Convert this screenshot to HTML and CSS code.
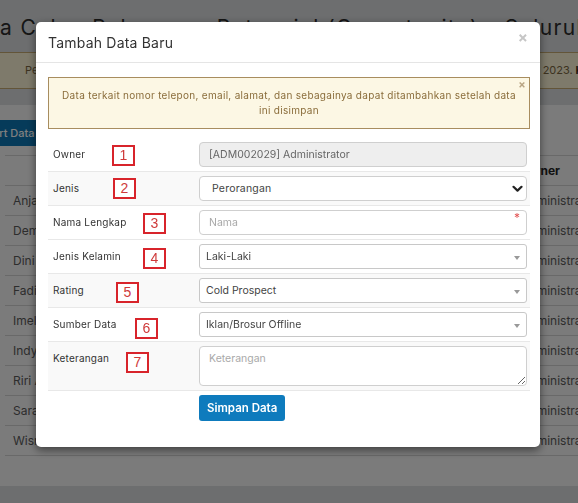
FILE: index.html
```html
<!DOCTYPE html>
<html lang="id">
<head>
<meta charset="utf-8">
<title>Tambah Data Baru</title>
<link rel="stylesheet" href="styles.css">
</head>
<body>
<div class="page">
  <h1 class="page-title">Data Calon Pelanggan Potensial (Opportunity) - Seluruh Data</h1>
  <p class="notice">Periode data yang ditampilkan saat ini adalah mulai dari tanggal 1 Januari 2023 sampai 31 Desember 2023. <b>Klik di sini</b> untuk mengubah periode.</p>
  <section class="card">
    <button class="btn-export" type="button">Export Data</button>
    <table class="data-table">
      <colgroup><col class="c-name"><col class="c-phone"><col class="c-status"><col class="c-owner"></colgroup>
      <thead>
        <tr><th></th><th>Telepon</th><th>Status</th><th>Owner</th></tr>
      </thead>
      <tbody>
        <tr><td>Anjani Putri</td><td>0812</td><td>Cold</td><td>Administrator</td></tr>
        <tr><td>Dembo Saputra</td><td>0813</td><td>Cold</td><td>Administrator</td></tr>
        <tr><td>Dini Rahma</td><td>0814</td><td>Cold</td><td>Administrator</td></tr>
        <tr><td>Fadil Hakim</td><td>0815</td><td>Cold</td><td>Administrator</td></tr>
        <tr><td>Imelda Sari</td><td>0816</td><td>Cold</td><td>Administrator</td></tr>
        <tr><td>Indy Permata</td><td>0817</td><td>Cold</td><td>Administrator</td></tr>
        <tr><td>Riri Anggraini</td><td>0818</td><td>Cold</td><td>Administrator</td></tr>
        <tr><td>Sarah Wulandari</td><td>0819</td><td>Cold</td><td>Administrator</td></tr>
        <tr><td>Wisnu Pratama</td><td>0821</td><td>Cold</td><td>Administrator</td></tr>
      </tbody>
    </table>
  </section>
</div>

<div class="backdrop"></div>

<div class="modal" role="dialog">
  <div class="modal-header">
    <h4 class="modal-title">Tambah Data Baru</h4>
    <span class="modal-close">&times;</span>
  </div>
  <div class="modal-body">
    <div class="alert">
      <span class="alert-close">&times;</span>
      Data terkait nomor telepon, email, alamat, dan sebagainya dapat ditambahkan setelah data ini disimpan
    </div>

    <div class="form">
      <div class="form-row">
        <div class="label">Owner</div>
        <div class="field"><div class="control disabled">[ADM002029] Administrator</div></div>
        <span class="tag tag-1">1</span>
      </div>
      <div class="form-row striped">
        <div class="label">Jenis</div>
        <div class="field">
          <div class="control native">Perorangan
            <svg class="chevron" width="11" height="8" viewBox="0 0 11 8"><path d="M1.5 1.8 L5.5 5.6 L9.5 1.8" fill="none" stroke="#222" stroke-width="2.2" stroke-linecap="round" stroke-linejoin="round"/></svg>
          </div>
        </div>
        <span class="tag tag-2">2</span>
      </div>
      <div class="form-row">
        <div class="label">Nama Lengkap</div>
        <div class="field"><div class="control placeholder">Nama<span class="required">*</span></div></div>
        <span class="tag tag-3">3</span>
      </div>
      <div class="form-row">
        <div class="label">Jenis Kelamin</div>
        <div class="field"><div class="control select2">Laki-Laki<span class="caret"></span></div></div>
        <span class="tag tag-4">4</span>
      </div>
      <div class="form-row striped">
        <div class="label">Rating</div>
        <div class="field"><div class="control select2">Cold Prospect<span class="caret"></span></div></div>
        <span class="tag tag-5">5</span>
      </div>
      <div class="form-row">
        <div class="label">Sumber Data</div>
        <div class="field"><div class="control select2">Iklan/Brosur Offline<span class="caret"></span></div></div>
        <span class="tag tag-6">6</span>
      </div>
      <div class="form-row striped last">
        <div class="label">Keterangan</div>
        <div class="field"><textarea class="textarea" placeholder="Keterangan"></textarea></div>
        <span class="tag tag-7">7</span>
      </div>
      <div class="form-actions">
        <button class="btn-save" type="button">Simpan Data</button>
      </div>
    </div>
  </div>
</div>
</body>
</html>
```
FILE: styles.css
```css
* { box-sizing: border-box; }

html, body {
  margin: 0;
  height: 100%;
  overflow: hidden;
}

body {
  background: #dadcde;
  font-family: "Inter", "Open Sans", sans-serif;
  color: #333;
}

/* ---------- page behind the modal ---------- */
.page {
  margin-left: -60px;
  width: 790px;
}

.page-title {
  margin: 0;
  padding: 14px 0 0 22px;
  font-size: 21px;
  line-height: 28px;
  font-weight: 400;
  color: #2c2c2c;
  white-space: nowrap;
  letter-spacing: 1.4px;
}

.notice {
  margin: 10px 0 0;
  height: 37px;
  padding: 0 0 0 85px;
  background: #fcf5d6;
  border-top: 1px solid #c7ab72;
  border-bottom: 1px solid #c7ab72;
  font-size: 11px;
  line-height: 35px;
  word-spacing: -0.4px;
  color: #7a6641;
  white-space: nowrap;
  overflow: hidden;
}
.notice b { color: #3a2f1c; }

.card {
  margin-top: 16px;
  background: #f6f6f6;
  padding: 15px 0 30px 25px;
}

.btn-export {
  display: block;
  height: 26px;
  padding: 0 8px;
  border: 0;
  border-radius: 3px;
  background: #0d76b4;
  color: #fff;
  font: 500 11px "Inter", sans-serif;
}

.data-table {
  margin: 9px 0 0 40px;
  border-collapse: collapse;
  table-layout: fixed;
  width: 690px;
  font-size: 12px;
  color: #5a5a5a;
}
.c-name { width: 220px; }
.c-phone { width: 145px; }
.c-status { width: 143px; }
.data-table th,
.data-table td {
  height: 30px;
  padding: 0 8px;
  text-align: left;
  border-top: 1px solid #d2d2d2;
  border-bottom: 1px solid #d2d2d2;
  white-space: nowrap;
}
.data-table th { font-weight: 700; color: #222; }

/* ---------- backdrop ---------- */
.backdrop {
  position: fixed;
  inset: 0;
  background: rgba(0, 0, 0, 0.5);
}

/* ---------- modal ---------- */
.modal {
  position: fixed;
  left: 36px;
  top: 22px;
  width: 504px;
  height: 425px;
  background: #fff;
  border-radius: 5px;
  box-shadow: 0 3px 9px rgba(0, 0, 0, 0.5);
  font-family: "Inter", "Open Sans", sans-serif;
}

.modal-header {
  height: 41px;
  padding: 0 12px;
  border-bottom: 1px solid #e5e5e5;
  display: flex;
  align-items: center;
  justify-content: space-between;
}

.modal-title {
  margin: 0;
  font-size: 14px;
  font-weight: 400;
  color: #333;
  letter-spacing: 0.2px;
}

.modal-close {
  align-self: flex-start;
  margin-top: 8px;
  margin-right: 0;
  font-size: 15px;
  font-weight: 700;
  color: #c6c6c6;
  line-height: 1;
}

.modal-body {
  padding: 14px 10px 0 12px;
}

.alert {
  position: relative;
  padding: 10px 8px;
  background: #fcf7e4;
  border: 1px solid #a88d5f;
  color: #8a6d3b;
  font-size: 10px;
  line-height: 15px;
  letter-spacing: 0.3px;
  text-align: center;
}

.alert-close {
  position: absolute;
  top: 1px;
  right: 3px;
  font-size: 11px;
  font-weight: 700;
  color: #b9a584;
  line-height: 1;
}

.form {
  margin-top: 9px;
  width: 482px;
}

.form-row {
  position: relative;
  display: grid;
  grid-template-columns: 151px 1fr;
  border-top: 1px solid #e8e8e8;
}
.form-row:first-child { border-top: 0; }
.form-row.striped { background: #f9f9f9; }
.form-row.last { border-bottom: 1px solid #e8e8e8; }

.label {
  padding: 9px 5px;
  font-size: 10px;
  line-height: 15px;
  letter-spacing: 0.2px;
  color: #333;
}

.field {
  padding: 4px 3px 4px 0;
}

.control {
  position: relative;
  height: 25px;
  border: 1px solid #cfcfcf;
  border-radius: 4px;
  background: #fff;
  padding: 0 9px;
  font-size: 10.5px;
  line-height: 23px;
  color: #555;
}
.control.disabled { background: #eee; color: #666; }
.control.native { padding-left: 12px; color: #444; letter-spacing: 0.2px; }
.control.placeholder { color: #a9a9a9; }
.control.select2 {
  border-color: #c8c8c8;
  border-radius: 3px;
  padding-left: 6px;
  color: #444;
}

.chevron {
  position: absolute;
  right: 3px;
  top: 8px;
}

.required {
  position: absolute;
  right: 6px;
  top: 1px;
  line-height: 1;
  font-size: 12px;
  color: #e25353;
}

.caret {
  position: absolute;
  right: 6px;
  top: 11px;
  width: 0;
  height: 0;
  border-left: 3.5px solid transparent;
  border-right: 3.5px solid transparent;
  border-top: 4px solid #999;
}

.textarea {
  display: block;
  width: 100%;
  height: 40px;
  margin: 0;
  border: 1px solid #cfcfcf;
  border-radius: 4px;
  padding: 4px 9px;
  font: 10.5px/15px "Inter", "Open Sans", sans-serif;
  color: #555;
  resize: vertical;
}
.textarea::placeholder { color: #a9a9a9; }

.form-actions {
  padding: 4px 0 0 151px;
}

.btn-save {
  height: 26px;
  padding: 0 8px;
  border: 0;
  border-radius: 3px;
  background: #0e7bbd;
  color: #fff;
  font: 600 11.5px "Inter", sans-serif;
}

/* ---------- red annotation tags ---------- */
.tag {
  position: absolute;
  width: 23px;
  height: 21px;
  border: 2px solid #d8242b;
  background: #fff;
  color: #cf3a3a;
  font: 14px/17px "Liberation Sans", sans-serif;
  text-align: center;
}
.tag-1 { left: 64px; top: 7px; }
.tag-2 { left: 65px; top: 6px; }
.tag-3 { left: 95px; top: 7px; }
.tag-4 { left: 95px; top: 8px; }
.tag-5 { left: 68px; top: 8px; }
.tag-6 { left: 87px; top: 10px; }
.tag-7 { left: 78px; top: 10px; }
```
